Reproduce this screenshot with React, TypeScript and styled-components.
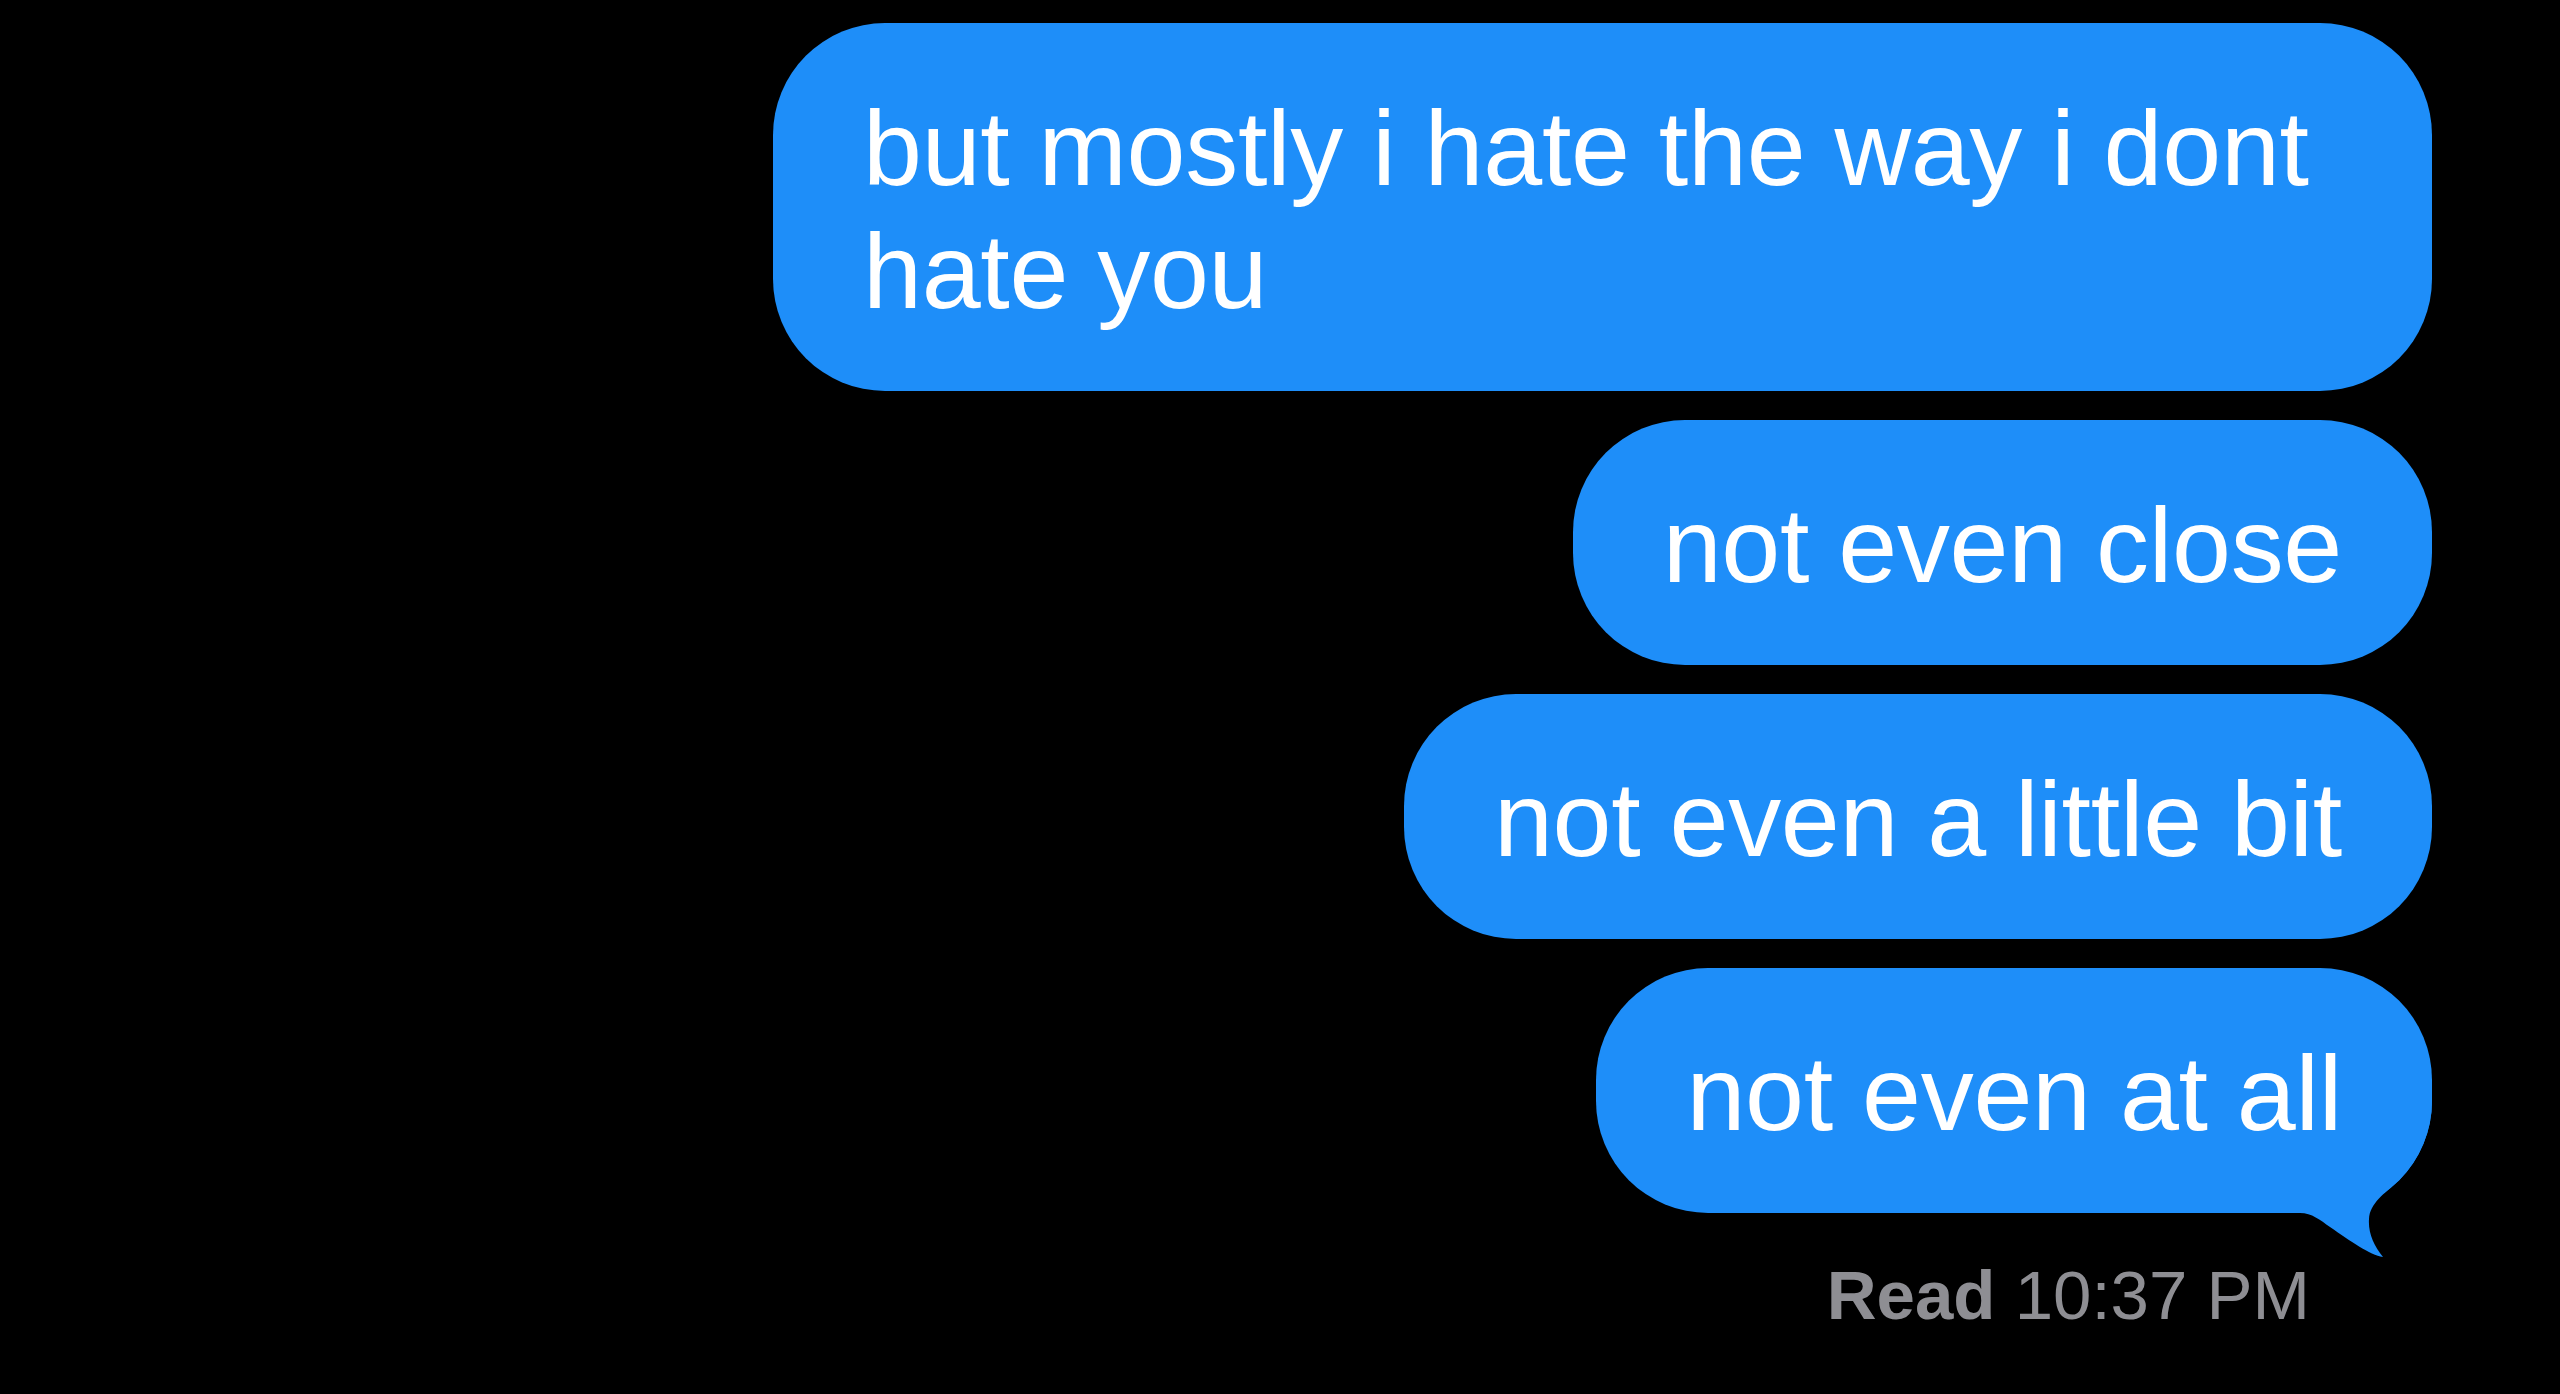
import React from "react";
import styled, { createGlobalStyle } from "styled-components";

const GlobalStyle = createGlobalStyle`
  html, body {
    margin: 0;
    padding: 0;
    background: #000000;
  }
  body {
    font-family: "Liberation Sans", Arial, sans-serif;
    -webkit-font-smoothing: antialiased;
  }
`;

const Screen = styled.main`
  min-height: 1394px;
  background: #000000;
  box-sizing: border-box;
  padding: 23px 128px 0 0;
  display: flex;
  flex-direction: column;
  align-items: flex-end;
`;

const Thread = styled.section`
  display: flex;
  flex-direction: column;
  align-items: flex-end;
  gap: 29px;
`;

const Bubble = styled.div`
  position: relative;
  box-sizing: border-box;
  max-width: 1659px;
  padding: 64px 90px 58px;
  border-radius: 112px;
  background: #1e8ef9;
  color: #ffffff;
  font-family: "Liberation Sans", Arial, sans-serif;
  font-size: 106px;
  line-height: 123px;
  letter-spacing: -0.3px;
`;

const BubbleText = styled.span`
  position: relative;
  z-index: 1;
`;

const Tail = styled.svg`
  position: absolute;
  z-index: 0;
  right: 0;
  bottom: -48px;
  width: 150px;
  height: 160px;
  display: block;
  pointer-events: none;
`;

const Receipt = styled.div`
  margin-top: 49px;
  margin-right: 122px;
  color: #8e8e93;
  font-family: "Liberation Sans", Arial, sans-serif;
  font-size: 69px;
  line-height: 68px;
  white-space: nowrap;
`;

const ReceiptLabel = styled.span`
  font-weight: 700;
`;

const BubbleTail: React.FC = () => (
  <Tail viewBox="0 0 150 160" aria-hidden="true">
    <path
      d="M10 0 H150 A112 112 0 0 1 117.2 79.2 C102 93 88 102 87 118 C86 132 92 145 101 156 C88 154 68 140 48 126 C38 119 30 112 18 112 H10 Z"
      fill="#1e8ef9"
    />
  </Tail>
);

const messages = [
  "but mostly i hate the way i dont hate you",
  "not even close",
  "not even a little bit",
  "not even at all",
];

export default function App() {
  return (
    <>
      <GlobalStyle />
      <Screen>
        <Thread>
          {messages.map((m, i) => {
            const last = i === messages.length - 1;
            return (
              <Bubble key={i}>
                <BubbleText>{m}</BubbleText>
                {last && <BubbleTail />}
              </Bubble>
            );
          })}
        </Thread>
        <Receipt>
          <ReceiptLabel>Read</ReceiptLabel> 10:37 PM
        </Receipt>
      </Screen>
    </>
  );
}
